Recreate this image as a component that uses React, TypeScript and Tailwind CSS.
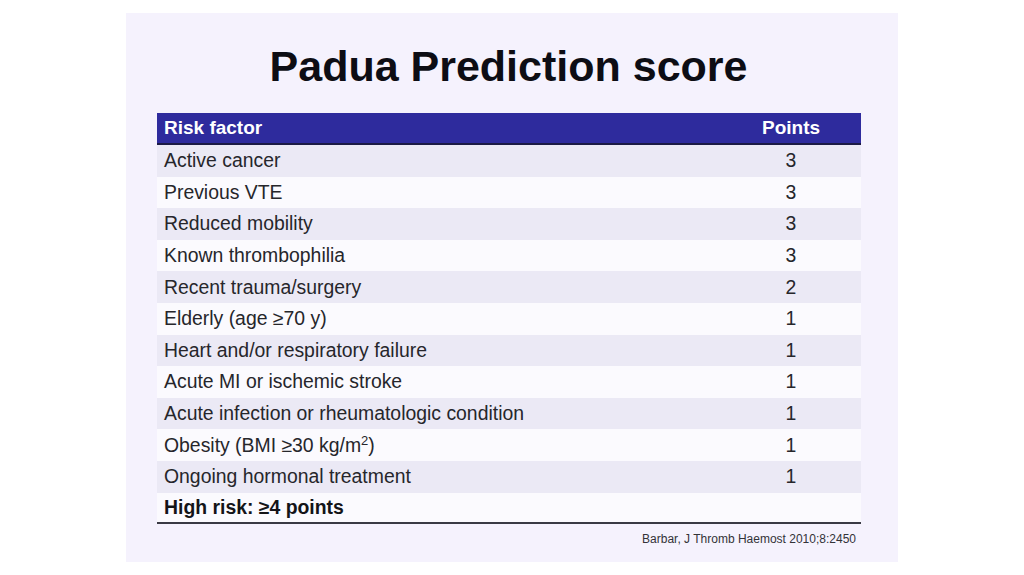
const rows: [React.ReactNode, string][] = [
  ['Active cancer', '3'],
  ['Previous VTE', '3'],
  ['Reduced mobility', '3'],
  ['Known thrombophilia', '3'],
  ['Recent trauma/surgery', '2'],
  ['Elderly (age ≥70 y)', '1'],
  ['Heart and/or respiratory failure', '1'],
  ['Acute MI or ischemic stroke', '1'],
  ['Acute infection or rheumatologic condition', '1'],
  [
    <>
      Obesity (BMI ≥30 kg/m<span className="text-[13px] relative -top-[7px]">2</span>)
    </>,
    '1',
  ],
  ['Ongoing hormonal treatment', '1'],
];

export default function App() {
  return (
    <div className="w-full h-[575px] bg-white pt-[13px]" style={{ fontFamily: '"Liberation Sans", Arial, sans-serif' }}>
      <div className="mx-auto w-[772px] h-[549px] bg-[#f5f2fd] flex flex-col">
        <h1 className="pt-[28px] pr-[7px] h-[78px] leading-[50px] text-center text-[43px] font-bold text-[#0d0d14]">
          Padua Prediction score
        </h1>
        <div className="mt-[22px] ml-[31px] w-[704px]">
          <div className="flex h-[32px] bg-[#2e2b9d] border-b-2 border-[#1b1a45] text-white font-bold text-[19px] items-center">
            <div className="flex-1 pl-[7px]">Risk factor</div>
            <div className="w-[140px] text-center">Points</div>
          </div>
          {rows.map(([label, pts], i) => (
            <div
              key={i}
              className={`flex h-[31.6px] items-center text-[19.4px] text-[#26262b] ${i % 2 === 0 ? 'bg-[#ebe9f5]' : 'bg-[#fbfafe]'}`}
            >
              <div className="flex-1 pl-[7px] whitespace-nowrap">{label}</div>
              <div className="w-[140px] text-center">{pts}</div>
            </div>
          ))}
          <div className="flex h-[31.6px] items-center text-[19.4px] font-bold text-[#141418] bg-[#fbfafe] border-b-2 border-[#3a3a44]">
            <div className="flex-1 pl-[7px]">High risk: ≥4 points</div>
          </div>
          <div className="mt-[6px] text-right pr-[5px] text-[12px] text-[#333338]">
            Barbar, J Thromb Haemost 2010;8:2450
          </div>
        </div>
      </div>
    </div>
  );
}
